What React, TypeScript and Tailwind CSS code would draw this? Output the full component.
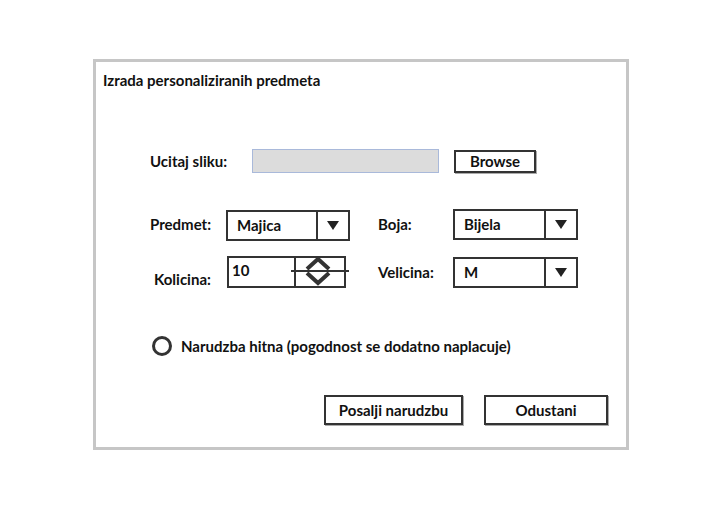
import React from "react";

const font = "font-['Lato','Open_Sans',sans-serif]";

const Arrow = () => (
  <svg width="14" height="11" viewBox="0 0 14 11">
    <path d="M1 1 L13 1 L7 10 Z" fill="#222" />
  </svg>
);

type TSelectProps = {
  value: string;
  width: string;
};

const Select: React.FC<TSelectProps> = ({ value, width }) => (
  <div
    className={`flex h-[31px] ${width} border-2 border-[#333] bg-white`}
  >
    <div className="flex flex-1 items-center pl-[9px] text-[15px] font-bold text-[#111]">
      {value}
    </div>
    <div className="flex w-[32px] items-center justify-center border-l-2 border-[#333]">
      <Arrow />
    </div>
  </div>
);

const Spinner = () => (
  <div className="relative flex h-[32px] w-[119px] border-2 border-[#333] bg-white">
    <div className="flex flex-1 items-start pl-[3px] pt-[1px] text-[15px] font-bold text-[#111]">
      10
    </div>
    <div className="w-[50px] border-l-2 border-[#333]" />
    <svg
      className="absolute left-[-2px] top-[-2px]"
      width="122"
      height="32"
      viewBox="0 0 122 32"
    >
      <path d="M64 15 L122 15" stroke="#333" strokeWidth="2" />
      <path
        d="M80 13 L91 3 L102 13 M80 17 L91 27 L102 17"
        fill="none"
        stroke="#333"
        strokeWidth="4"
      />
    </svg>
  </div>
);

const Button: React.FC<{ text: string; width: string }> = ({ text, width }) => (
  <button
    className={`flex h-[30px] ${width} items-center justify-center border-2 border-[#333] bg-white text-[15px] font-bold text-[#111] shadow-[1px_1px_0_#aaa]`}
  >
    {text}
  </button>
);

const App: React.FC = () => {
  return (
    <div className={`h-[532px] w-[716px] bg-white pl-[93px] pt-[59px] ${font}`}>
      <div className="flex h-[391px] w-[536px] flex-col border-[3px] border-[#c6c6c6] bg-white">
        <p className="pl-[7px] pt-[8px] text-[15px] font-bold leading-[20px] text-[#111]">
          Izrada personaliziranih predmeta
        </p>

        {/* upload */}
        <div className="mt-[59px] flex items-center pl-[54px]">
          <span className="w-[102px] text-[15px] font-bold text-[#111]">
            Ucitaj sliku:
          </span>
          <div className="h-[24px] w-[187px] border border-[#a9b9da] bg-[#dcdcdc]" />
          <div className="ml-[15px]">
            <button className="flex h-[23px] w-[82px] items-center justify-center border-2 border-[#333] bg-white text-[15px] font-bold text-[#111] shadow-[1px_1px_0_#aaa]">
              Browse
            </button>
          </div>
        </div>

        {/* row 1 */}
        <div className="mt-[35px] flex pl-[54px]">
          <div className="flex w-[228px] items-center">
            <span className="w-[76px] text-[15px] font-bold text-[#111]">
              Predmet:
            </span>
            <div className="mt-[2px]">
              <Select value="Majica" width="w-[124px]" />
            </div>
          </div>
          <div className="flex items-center">
            <span className="w-[75px] text-[15px] font-bold text-[#111]">
              Boja:
            </span>
            <Select value="Bijela" width="w-[125px]" />
          </div>
        </div>

        {/* row 2 */}
        <div className="mt-[13px] flex pl-[54px]">
          <div className="flex w-[228px] items-center">
            <span className="mt-[14px] w-[77px] pl-[4px] text-[15px] font-bold text-[#111]">
              Kolicina:
            </span>
            <Spinner />
          </div>
          <div className="flex items-center">
            <span className="w-[75px] text-[15px] font-bold text-[#111]">
              Velicina:
            </span>
            <Select value="M" width="w-[125px]" />
          </div>
        </div>

        {/* radio */}
        <div className="mt-[44px] flex items-center pl-[56px]">
          <span className="h-[20px] w-[20px] rounded-full border-[3px] border-[#333]" />
          <span className="ml-[9px] text-[15px] font-bold text-[#111]">
            Narudzba hitna (pogodnost se dodatno naplacuje)
          </span>
        </div>

        {/* actions */}
        <div className="mt-[38px] flex justify-end gap-[21px] pr-[18px]">
          <Button text="Posalji narudzbu" width="w-[139px]" />
          <Button text="Odustani" width="w-[124px]" />
        </div>
      </div>
    </div>
  );
};

export default App;
